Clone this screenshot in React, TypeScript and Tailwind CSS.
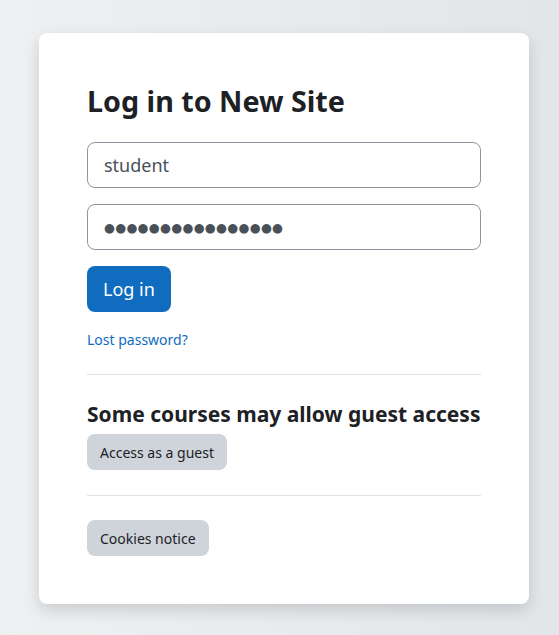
// Login card, Moodle style

const font = { fontFamily: '"Noto Sans", "Open Sans", Arial, sans-serif' };

export default function App() {
  return (
    <div
      className="min-h-screen w-full bg-gradient-to-r from-[#eef0f2] to-[#e3e6e9] pt-[33px] pl-[39px] pr-[30px] pb-[31px]"
      style={font}
    >
      <div className="w-[490px] rounded-lg bg-white px-12 pt-[48px] pb-[48px] shadow-[0_6px_16px_rgba(0,0,0,0.15)]">
        <h1 className="text-[28.7px] font-bold leading-[40px] text-[#1d2125]">
          Log in to New Site
        </h1>

        <div className="mt-[21px] flex flex-col gap-[16px]">
          <input
            readOnly
            value="student"
            className="h-[46px] w-full rounded-lg border border-[#8f959e] bg-white px-4 text-[18px] text-[#495057] outline-none"
          />
          <input
            readOnly
            value="●●●●●●●●●●●●●●●●"
            className="h-[46px] w-full rounded-lg border border-[#8f959e] bg-white px-4 text-[12.5px] tracking-[0.3px] text-[#495057] outline-none [font-family:'DejaVu_Sans',sans-serif]"
          />
        </div>

        <button className="mt-[16px] h-[46px] rounded-lg bg-[#0f6cbf] px-4 text-[18px] leading-none text-white">
          Log in
        </button>

        <div className="mt-[15px]">
          <a href="#" className="text-[14px] leading-[21px] text-[#0f6cbf]">
            Lost password?
          </a>
        </div>

        <hr className="mt-[23px] border-t border-[#dee2e6]" />

        <h2 className="mt-[24px] text-[21px] font-bold leading-[30px] text-[#1d2125]">
          Some courses may allow guest access
        </h2>
        <button className="mt-[5px] h-[36px] rounded-lg bg-[#ced4da] px-[13px] text-[14px] text-[#1d2125]">
          Access as a guest
        </button>

        <hr className="mt-[25px] border-t border-[#dee2e6]" />

        <button className="mt-[24px] h-[36px] rounded-lg bg-[#ced4da] px-[13px] text-[14px] text-[#1d2125]">
          Cookies notice
        </button>
      </div>
    </div>
  );
}
